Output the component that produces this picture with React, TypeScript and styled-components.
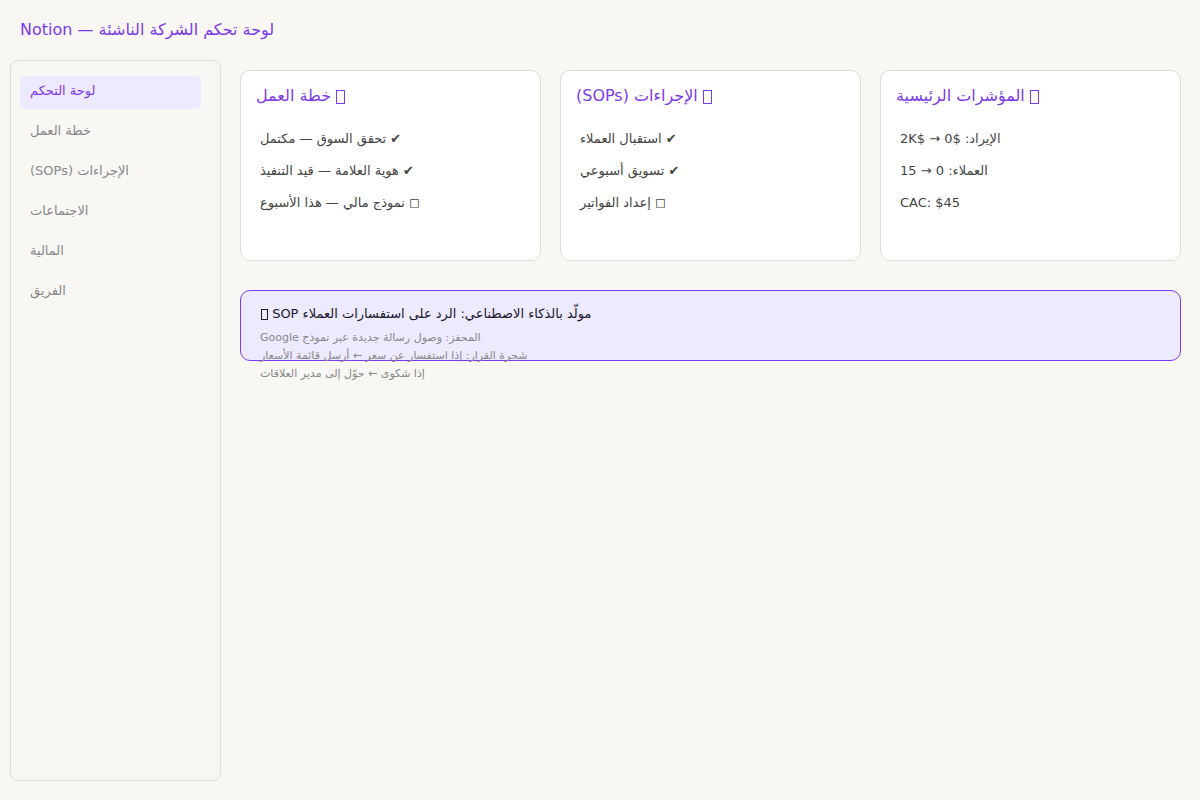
import React from "react";
import styled, { createGlobalStyle } from "styled-components";

const GlobalStyle = createGlobalStyle`
  *, *::before, *::after {
    box-sizing: border-box;
  }
  body {
    margin: 0;
    background: #f8f7f4;
    font-family: "DejaVu Sans", sans-serif;
  }
`;

const Page = styled.div`
  display: flex;
  flex-direction: column;
  min-height: 100vh;
`;

const Header = styled.header`
  padding: 20px 20px 21px;
`;

const PageTitle = styled.h1`
  margin: 0;
  font-size: 16px;
  font-weight: 400;
  line-height: 19px;
  color: #7c3aed;
  text-align: left;
`;

const Body = styled.div`
  display: flex;
  flex: 1;
  gap: 19px;
  padding: 0 19px 19px 10px;
`;

const Sidebar = styled.nav`
  display: flex;
  flex: 0 0 211px;
  flex-direction: column;
  gap: 7px;
  padding: 15px 19px 15px 9px;
  border: 1px solid #e0ddd8;
  border-radius: 8px;
`;

const NavLink = styled.a<{ $active: boolean }>`
  padding: 7px 10px 11px;
  border-radius: 6px;
  background: ${(p) => (p.$active ? "#ede9fe" : "transparent")};
  color: ${(p) => (p.$active ? "#7c3aed" : "#888888")};
  font-size: 13px;
  line-height: 15px;
  text-align: left;
  text-decoration: none;
`;

const Main = styled.main`
  display: flex;
  flex: 1;
  flex-direction: column;
  gap: 29px;
  min-width: 0;
  padding-top: 10px;
`;

const CardGrid = styled.div`
  display: grid;
  grid-template-columns: repeat(3, minmax(0, 1fr));
  gap: 19px;
`;

const Card = styled.section`
  min-height: 191px;
  padding: 15px;
  border: 1px solid #e0ddd8;
  border-radius: 10px;
  background: #ffffff;
`;

const CardTitle = styled.h2`
  margin: 0;
  font-size: 16px;
  font-weight: 400;
  line-height: 19px;
  color: #7c3aed;
  text-align: left;
`;

const CardList = styled.ul`
  display: flex;
  flex-direction: column;
  gap: 17px;
  margin: 26px 0 0;
  padding: 0 4px;
  list-style: none;
`;

const CardItem = styled.li`
  font-size: 13px;
  line-height: 15px;
  color: #444444;
  text-align: left;
`;

const Marker = styled.span<{ $small?: boolean }>`
  display: inline-block;
  width: ${(p) => (p.$small ? 7 : 9)}px;
  height: ${(p) => (p.$small ? 11 : 14)}px;
  margin-left: ${(p) => (p.$small ? 1 : 0)}px;
  border: 1px solid currentColor;
  vertical-align: ${(p) => (p.$small ? -2 : -3)}px;
`;

const Procedure = styled.section`
  height: 71px;
  padding: 15px 19px;
  border: 1px solid #7c3aed;
  border-radius: 10px;
  background: #ede9fe;
`;

const ProcedureTitle = styled.h2`
  margin: 0 0 8px;
  font-size: 13px;
  font-weight: 400;
  line-height: 15px;
  color: #1a1a2e;
  text-align: left;
`;

const ProcedureLine = styled.p`
  margin: 0;
  font-size: 11px;
  line-height: 18px;
  color: #888888;
  text-align: left;
`;

const navItems = [
  "لوحة التحكم",
  "خطة العمل",
  "الإجراءات (SOPs)",
  "الاجتماعات",
  "المالية",
  "الفريق",
];

const cards = [
  {
    title: "خطة العمل",
    items: [
      "✔ تحقق السوق — مكتمل",
      "✔ هوية العلامة — قيد التنفيذ",
      "◻ نموذج مالي — هذا الأسبوع",
    ],
  },
  {
    title: "الإجراءات (SOPs)",
    items: ["✔ استقبال العملاء", "✔ تسويق أسبوعي", "◻ إعداد الفواتير"],
  },
  {
    title: "المؤشرات الرئيسية",
    items: ["الإيراد: $0 → $2K", "العملاء: 0 → 15", "CAC: $45"],
  },
];

const procedureLines = [
  "المحفز: وصول رسالة جديدة عبر نموذج Google",
  "شجرة القرار: إذا استفسار عن سعر ← أرسل قائمة الأسعار",
  "إذا شكوى ← حوّل إلى مدير العلاقات",
];

export default function App() {
  return (
    <Page lang="ar">
      <GlobalStyle />
      <Header>
        <PageTitle dir="auto">Notion — لوحة تحكم الشركة الناشئة</PageTitle>
      </Header>
      <Body>
        <Sidebar>
          {navItems.map((label, i) => (
            <NavLink
              key={label}
              href="#"
              dir="auto"
              $active={i === 0}
              aria-current={i === 0 ? "page" : undefined}
            >
              {label}
            </NavLink>
          ))}
        </Sidebar>
        <Main>
          <CardGrid>
            {cards.map((card) => (
              <Card key={card.title}>
                <CardTitle dir="rtl">
                  <Marker aria-hidden="true" /> {card.title}
                </CardTitle>
                <CardList>
                  {card.items.map((item) => (
                    <CardItem key={item} dir="auto">
                      {item}
                    </CardItem>
                  ))}
                </CardList>
              </Card>
            ))}
          </CardGrid>
          <Procedure>
            <ProcedureTitle dir="ltr">
              <Marker $small aria-hidden="true" /> SOP مولّد بالذكاء الاصطناعي:
              الرد على استفسارات العملاء
            </ProcedureTitle>
            {procedureLines.map((line) => (
              <ProcedureLine key={line} dir="auto">
                {line}
              </ProcedureLine>
            ))}
          </Procedure>
        </Main>
      </Body>
    </Page>
  );
}
